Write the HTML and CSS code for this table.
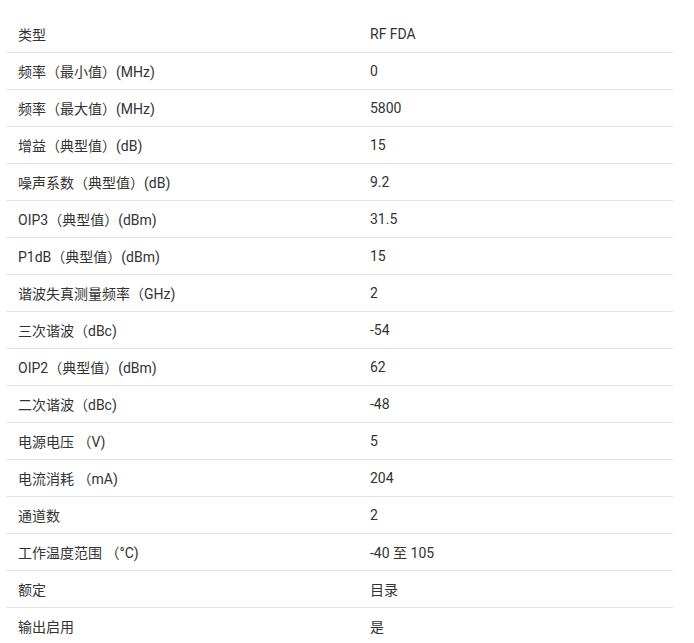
FILE: index.html
```html
<!DOCTYPE html>
<html lang="zh-CN">
<head>
<meta charset="utf-8">
<title>参数</title>
<link rel="stylesheet" href="styles.css">
</head>
<body>
<div class="spec-table">
  <div class="row"><div class="cell">类型</div><div class="cell">RF FDA</div></div>
  <div class="row"><div class="cell">频率（最小值）(MHz)</div><div class="cell">0</div></div>
  <div class="row"><div class="cell">频率（最大值）(MHz)</div><div class="cell">5800</div></div>
  <div class="row"><div class="cell">增益（典型值）(dB)</div><div class="cell">15</div></div>
  <div class="row"><div class="cell">噪声系数（典型值）(dB)</div><div class="cell">9.2</div></div>
  <div class="row"><div class="cell">OIP3（典型值）(dBm)</div><div class="cell">31.5</div></div>
  <div class="row"><div class="cell">P1dB（典型值）(dBm)</div><div class="cell">15</div></div>
  <div class="row"><div class="cell">谐波失真测量频率（GHz)</div><div class="cell">2</div></div>
  <div class="row"><div class="cell">三次谐波（dBc)</div><div class="cell">-54</div></div>
  <div class="row"><div class="cell">OIP2（典型值）(dBm)</div><div class="cell">62</div></div>
  <div class="row"><div class="cell">二次谐波（dBc)</div><div class="cell">-48</div></div>
  <div class="row"><div class="cell">电源电压 （V)</div><div class="cell">5</div></div>
  <div class="row"><div class="cell">电流消耗 （mA)</div><div class="cell">204</div></div>
  <div class="row"><div class="cell">通道数</div><div class="cell">2</div></div>
  <div class="row"><div class="cell">工作温度范围 （°C)</div><div class="cell">-40 至 105</div></div>
  <div class="row"><div class="cell">额定</div><div class="cell">目录</div></div>
  <div class="row"><div class="cell">输出启用</div><div class="cell">是</div></div>
</div>
</body>
</html>
```
FILE: styles.css
```css
html, body {
  margin: 0;
  padding: 0;
  background: #fff;
}
body {
  font-family: Roboto, "Noto Sans CJK SC", sans-serif;
  font-size: 14px;
  color: #333;
}
.spec-table {
  margin: 16px 0 0 6px;
  width: 667px;
}
.row {
  display: grid;
  grid-template-columns: 352px 1fr;
  height: 36px;
  border-bottom: 1px solid #e4e4e4;
}
.cell {
  display: flex;
  align-items: center;
  padding-left: 12px;
  white-space: nowrap;
}
```
